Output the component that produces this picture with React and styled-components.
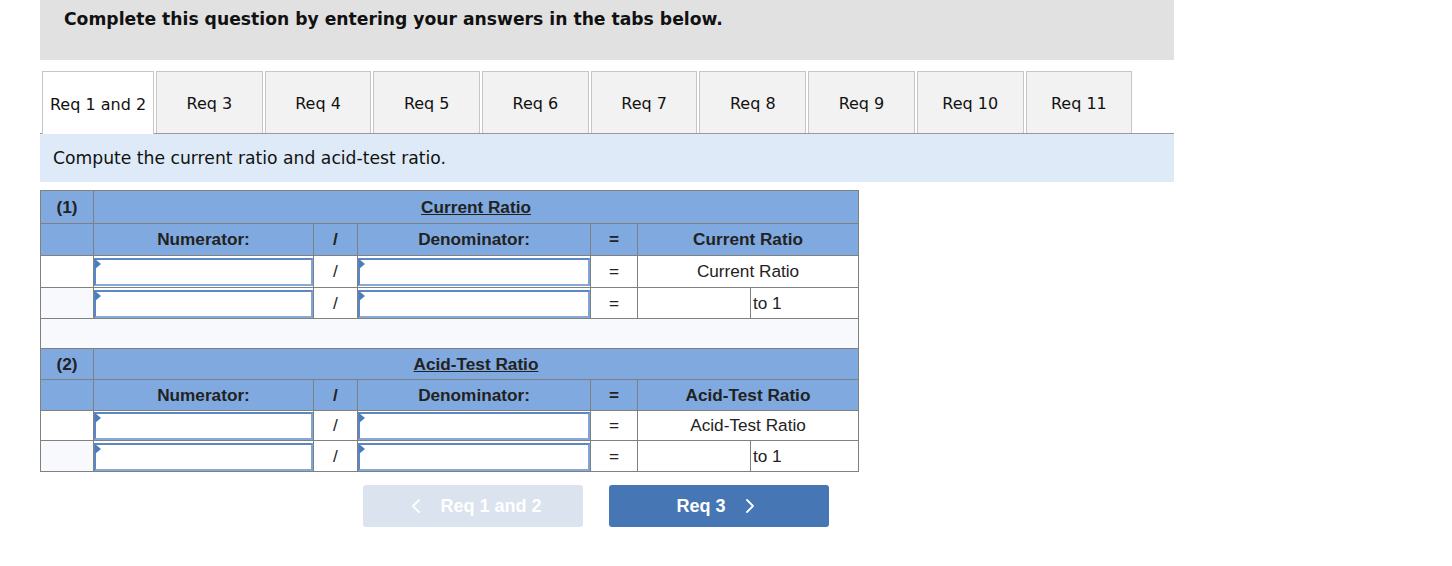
import React from 'react'
import styled, { createGlobalStyle } from 'styled-components'
import { ChevronLeft, ChevronRight } from 'lucide-react'

const GlobalStyle = createGlobalStyle`
  body {
    margin: 0;
    background: #ffffff;
    font-family: "Liberation Sans", Arial, sans-serif;
  }
`

const Page = styled.div`
  width: 1134px;
  padding-left: 40px;
`

const Banner = styled.div`
  height: 60px;
  background: #e1e1e1;
  padding: 9px 0 0 24px;
  box-sizing: border-box;
  font-family: "DejaVu Sans", Verdana, sans-serif;
  font-weight: bold;
  font-size: 17.2px;
  color: #111;
`

const TabBar = styled.div`
  display: flex;
  gap: 2px;
  margin-top: 11px;
  padding-left: 2px;
  border-bottom: 1px solid #9a9a9a;
`

const Tab = styled.div`
  width: ${({ $wide }) => ($wide ? '112px' : '106.7px')};
  box-sizing: border-box;
  display: flex;
  align-items: center;
  justify-content: center;
  padding-top: 2px;
  border: 1px solid #c6c6c6;
  border-bottom: none;
  background: ${({ $active }) => ($active ? '#ffffff' : '#f2f2f2')};
  margin-bottom: ${({ $active }) => ($active ? '-1px' : '0')};
  height: ${({ $active }) => ($active ? '63px' : '62px')};
  font-family: "DejaVu Sans", Verdana, sans-serif;
  font-size: 16px;
  color: #111;
`

const Prompt = styled.div`
  height: 48px;
  background: #deeaf7;
  display: flex;
  align-items: center;
  padding-left: 13px;
  font-family: "DejaVu Sans", Verdana, sans-serif;
  font-size: 17.2px;
  color: #111;
`

const Table = styled.table`
  margin-top: 8px;
  border-collapse: collapse;
  table-layout: fixed;
  width: 818px;
  font-size: 17.2px;
  color: #222;
`

const Cell = styled.td`
  border: 1px solid #808080;
  padding: 0;
  text-align: ${({ $align }) => $align || 'center'};
  height: ${({ $h }) => $h || 29}px;
  background: ${({ $bg }) => $bg || '#ffffff'};
  font-weight: ${({ $bold }) => ($bold ? 'bold' : 'normal')};
  padding-left: ${({ $pad }) => $pad || 0}px;
`

const Title = styled.span`
  font-weight: bold;
  text-decoration: underline;
`

const InputBox = styled.div`
  position: relative;
  height: 28px;
  margin: 1px 0 0;
  box-sizing: border-box;
  border: 2px solid #5b87c4;
  border-right-color: #7ea3d6;
  border-bottom-color: #86a9da;
  background: #ffffff;

  &::before {
    content: '';
    position: absolute;
    left: -1px;
    top: -1px;
    border-top: 5px solid transparent;
    border-bottom: 5px solid transparent;
    border-left: 6px solid #4a7ebb;
  }
`

const Nav = styled.div`
  display: flex;
  gap: 26px;
  margin-top: 13px;
  padding-left: 323px;
`

const NavButton = styled.div`
  width: 220px;
  height: 42px;
  border-radius: 3px;
  display: flex;
  align-items: center;
  justify-content: center;
  gap: 12px;
  background: ${({ $disabled }) => ($disabled ? '#dae3ee' : '#4676b4')};
  color: #ffffff;
  font-weight: bold;
  font-size: 18px;
`

const HEAD = '#80aadf'
const ALT = '#f7f9fc'

function RatioBlock({ num, title, heights }) {
  const [h1, h2, h3, h4] = heights
  return (
    <>
      <tr>
        <Cell $bg={HEAD} $bold $h={h1}>({num})</Cell>
        <Cell $bg={HEAD} colSpan={6}><Title>{title}</Title></Cell>
      </tr>
      <tr>
        <Cell $bg={HEAD} $h={h2} />
        <Cell $bg={HEAD} $bold>Numerator:</Cell>
        <Cell $bg={HEAD} $bold>/</Cell>
        <Cell $bg={HEAD} $bold>Denominator:</Cell>
        <Cell $bg={HEAD} $bold>=</Cell>
        <Cell $bg={HEAD} $bold colSpan={2}>{title}</Cell>
      </tr>
      <tr>
        <Cell $h={h3} />
        <Cell><InputBox /></Cell>
        <Cell>/</Cell>
        <Cell><InputBox /></Cell>
        <Cell>=</Cell>
        <Cell colSpan={2}>{title}</Cell>
      </tr>
      <tr>
        <Cell $bg={ALT} $h={h4} />
        <Cell><InputBox /></Cell>
        <Cell>/</Cell>
        <Cell><InputBox /></Cell>
        <Cell>=</Cell>
        <Cell />
        <Cell $align="left" $pad={2}>to 1</Cell>
      </tr>
    </>
  )
}

const tabs = ['Req 1 and 2', 'Req 3', 'Req 4', 'Req 5', 'Req 6', 'Req 7', 'Req 8', 'Req 9', 'Req 10', 'Req 11']

export default function App() {
  return (
    <Page>
      <GlobalStyle />
      <Banner>Complete this question by entering your answers in the tabs below.</Banner>
      <TabBar>
        {tabs.map((t, i) => (
          <Tab key={t} $active={i === 0} $wide={i === 0}>{t}</Tab>
        ))}
      </TabBar>
      <Prompt>Compute the current ratio and acid-test ratio.</Prompt>
      <Table>
        <colgroup>
          <col style={{ width: 53 }} />
          <col style={{ width: 220 }} />
          <col style={{ width: 44 }} />
          <col style={{ width: 233 }} />
          <col style={{ width: 47 }} />
          <col style={{ width: 113 }} />
          <col style={{ width: 108 }} />
        </colgroup>
        <tbody>
          <RatioBlock num={1} title="Current Ratio" heights={[32, 31, 31, 30]} />
          <tr>
            <Cell $bg={ALT} colSpan={7} $h={29} />
          </tr>
          <RatioBlock num={2} title="Acid-Test Ratio" heights={[30, 30, 29, 30]} />
        </tbody>
      </Table>
      <Nav>
        <NavButton $disabled>
          <ChevronLeft size={24} strokeWidth={1.8} />
          Req 1 and 2
        </NavButton>
        <NavButton>
          Req 3
          <ChevronRight size={24} strokeWidth={1.8} />
        </NavButton>
      </Nav>
    </Page>
  )
}
